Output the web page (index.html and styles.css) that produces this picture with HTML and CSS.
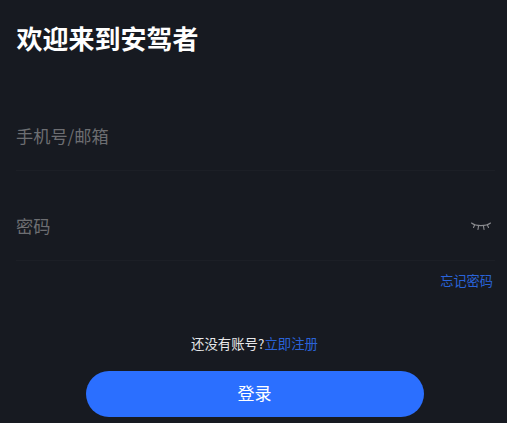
FILE: index.html
```html
<!DOCTYPE html>
<html lang="zh-CN">
<head>
<meta charset="utf-8">
<title>登录</title>
<link rel="stylesheet" href="styles.css">
</head>
<body>
<main class="page">
  <h1 class="title">欢迎来到安驾者</h1>
  <div class="field field-first"><span class="placeholder">手机号/邮箱</span></div>
  <div class="field">
    <span class="placeholder">密码</span>
    <svg class="eye" width="20" height="11" viewBox="0 0 20 11" fill="none" stroke="#8b8c90" stroke-width="1.1" stroke-linecap="round">
      <path d="M0.5 2C5 5.5 15 5.5 19.5 2"/>
      <path d="M3.5 4.2L2.5 6.5M7.5 5.2L7 8.5M12.5 5.2L13 8.5M16.5 4.2L17.5 6.5"/>
    </svg>
  </div>
  <div class="forgot-row"><a class="link forgot">忘记密码</a></div>
  <p class="register">还没有账号?<a class="link">立即注册</a></p>
  <button class="submit" type="button"><span class="submit-label">登录</span></button>
</main>
</body>
</html>
```

FILE: styles.css
```css
* { box-sizing: border-box; }
html, body { margin: 0; height: 100%; }
body {
  background: #171a21;
  font-family: "Noto Sans CJK SC", "Noto Sans", sans-serif;
  overflow: hidden;
}
.page { display: flex; flex-direction: column; height: 423px; padding: 0 12px 0 16px; }
.title {
  margin: 0;
  padding: 19px 0 0 0.5px;
  height: 59px;
  font-size: 26px;
  line-height: 38px;
  font-weight: 700;
  color: #fff;
}
.field {
  display: flex;
  align-items: center;
  justify-content: space-between;
  height: 90px;
  padding-top: 44px;
  padding-bottom: 23px;
  border-bottom: 1px solid #1c1f26;
}
.field-first { height: 112px; padding-top: 66px; padding-bottom: 23px; }
.placeholder { font-size: 17.2px; line-height: 22px; color: #6d6e72; }
.eye { margin-right: 4px; }
.forgot-row { display: flex; justify-content: flex-end; padding: 10px 2px 0 0; }
.link { color: #2a63d8; }
.forgot { font-size: 13.2px; line-height: 20px; }
.register {
  margin: 42px 0 0;
  padding-right: 2px;
  text-align: center;
  font-size: 13.4px;
  line-height: 20px;
  color: #e8e8ea;
}
.submit {
  align-self: center;
  display: flex;
  align-items: center;
  justify-content: center;
  width: 338px;
  height: 46px;
  margin: 18px 2px 0 0;
  padding: 0 0 3px;
  border: 0;
  border-radius: 23px;
  background: #2b6fff;
  color: #fff;
  font: 400 17px/24px "Noto Sans CJK SC", "Noto Sans", sans-serif;
}
```
